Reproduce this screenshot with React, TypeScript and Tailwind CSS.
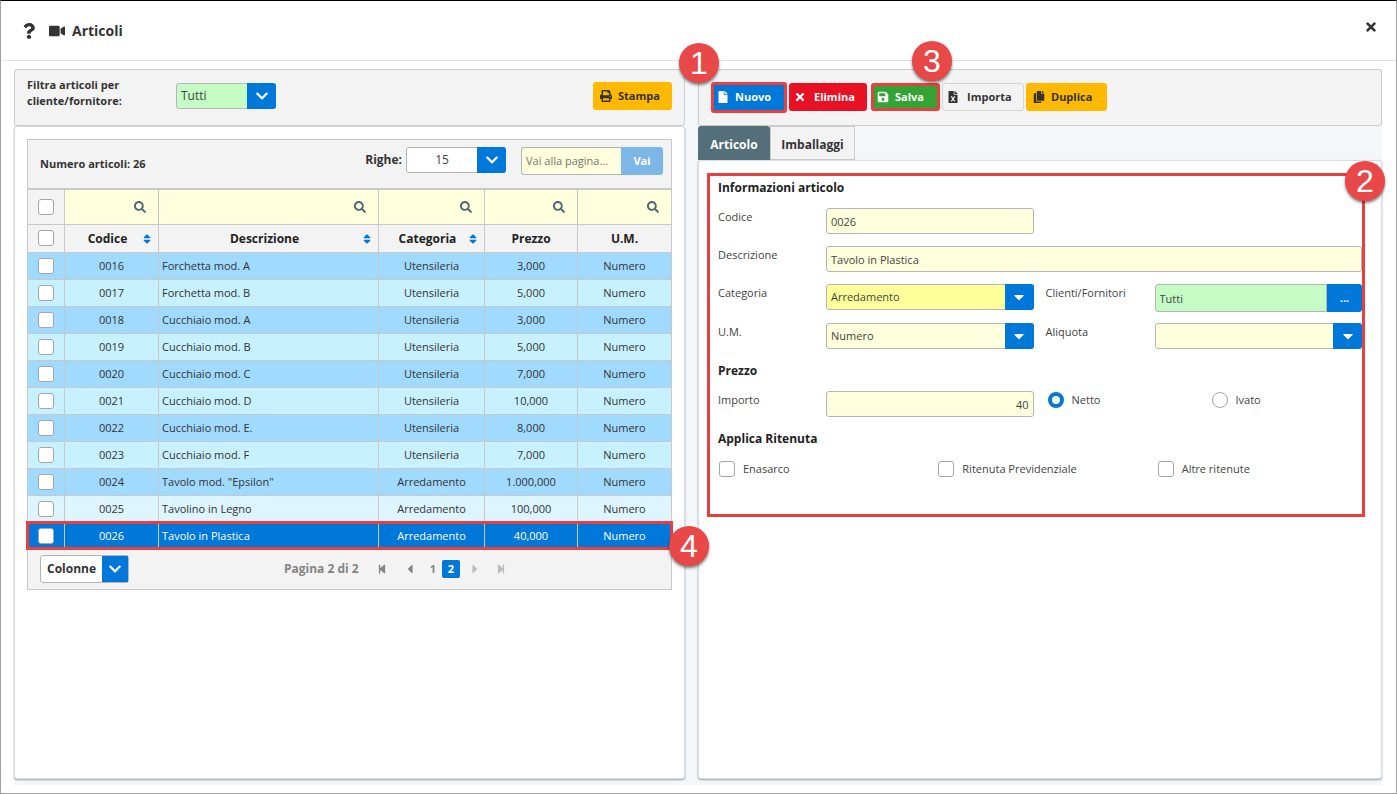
import { useState } from "react";
import type { ReactNode } from "react";
import {
  FaCaretDown,
  FaChevronDown,
  FaCopy,
  FaFile,
  FaFileExcel,
  FaPrint,
  FaQuestion,
  FaSave,
  FaSearch,
  FaSort,
  FaStepBackward,
  FaStepForward,
  FaCaretLeft,
  FaCaretRight,
  FaTimes,
  FaVideo,
} from "react-icons/fa";

type Article = {
  code: string;
  description: string;
  category: string;
  price: string;
  unit: string;
};

const ARTICLES: Article[] = [
  { code: "0016", description: "Forchetta mod. A", category: "Utensileria", price: "3,000", unit: "Numero" },
  { code: "0017", description: "Forchetta mod. B", category: "Utensileria", price: "5,000", unit: "Numero" },
  { code: "0018", description: "Cucchiaio mod. A", category: "Utensileria", price: "3,000", unit: "Numero" },
  { code: "0019", description: "Cucchiaio mod. B", category: "Utensileria", price: "5,000", unit: "Numero" },
  { code: "0020", description: "Cucchiaio mod. C", category: "Utensileria", price: "7,000", unit: "Numero" },
  { code: "0021", description: "Cucchiaio mod. D", category: "Utensileria", price: "10,000", unit: "Numero" },
  { code: "0022", description: "Cucchiaio mod. E.", category: "Utensileria", price: "8,000", unit: "Numero" },
  { code: "0023", description: "Cucchiaio mod. F", category: "Utensileria", price: "7,000", unit: "Numero" },
  { code: "0024", description: 'Tavolo mod. "Epsilon"', category: "Arredamento", price: "1.000,000", unit: "Numero" },
  { code: "0025", description: "Tavolino in Legno", category: "Arredamento", price: "100,000", unit: "Numero" },
  { code: "0026", description: "Tavolo in Plastica", category: "Arredamento", price: "40,000", unit: "Numero" },
];

const COLUMNS = [
  { label: "Codice", sortable: true },
  { label: "Descrizione", sortable: true },
  { label: "Categoria", sortable: true },
  { label: "Prezzo", sortable: false },
  { label: "U.M.", sortable: false },
];

const CHECKBOX = "block size-4 shrink-0 appearance-none rounded-[3px] border border-[#a6a6a6] bg-white checked:bg-[#0078d9]";
const RADIO = "size-4 appearance-none rounded-full border border-[#a6a6a6] bg-white checked:border-4 checked:border-[#0078d9]";
const FIELD = "h-[26px] w-full min-w-0 rounded-[3px] border border-[#b5b5b5] bg-[#ffffdd] px-1 text-[#444]";
const CELL = "border border-[#c8c8c8]";
const PANEL = "grow rounded-[3px] border border-[#d5dde2] bg-white shadow-[0_1px_2px_rgba(0,0,0,0.35)]";

const rowColor = (i: number, selected: boolean) => {
  if (selected) return "bg-[#0078d9] text-white";
  if (i === 9) return "bg-[#dcf5ff]";
  return i % 2 === 0 ? "bg-[#a0dafe]" : "bg-[#c7f1fe]";
};

const Callout = ({ n, className }: { n: number; className: string }) => (
  <span
    className={`absolute z-20 flex size-10 items-center justify-center rounded-full bg-[#e84848] font-['Liberation_Sans',sans-serif] text-[32px] font-normal leading-none text-white shadow-[0_2px_3px_rgba(0,0,0,0.5)] ${className}`}
  >
    {n}
  </span>
);

type DropdownProps = {
  id: string;
  label: string;
  options: string[];
  className: string;
  caret?: boolean;
};

const Dropdown = ({ id, label, options, className, caret }: DropdownProps) => (
  <div className="relative w-full self-start">
    <select
      id={id}
      aria-label={label}
      className={`block h-[26px] w-full appearance-none rounded-[3px] border border-[#b5b5b5] pl-1 pr-8 text-[#444] ${className}`}
    >
      {options.map(o => (
        <option key={o}>{o}</option>
      ))}
    </select>
    <span className="pointer-events-none absolute inset-y-0 right-0 flex w-[29px] items-center justify-center rounded-r-[3px] bg-[#0078d9] text-white">
      {caret ? <FaCaretDown className="size-4" /> : <FaChevronDown className="size-[14px]" />}
    </span>
  </div>
);

const ToolButton = ({ icon, children, className }: { icon: ReactNode; children: ReactNode; className: string }) => (
  <button type="button" className={`flex shrink-0 items-center rounded-[3px] font-bold ${className}`}>
    {icon}
    {children}
  </button>
);

const ArticleList = () => {
  const [selected, setSelected] = useState("0026");

  return (
    <section className="flex min-w-0 flex-col">
      <div className="flex h-[57px] items-start rounded-[3px] border border-[#ccc] bg-[#f3f3f3] px-3">
        <label htmlFor="filter" className="mt-[7px] w-[149px] pr-10 font-bold leading-4">
          Filtra articoli per cliente/fornitore:
        </label>
        <div className="mt-[13px] w-[100px] text-[12px]">
          <Dropdown id="filter" label="Filtra articoli" options={["Tutti"]} className="bg-[#c5fbc5]" />
        </div>
        <ToolButton icon={<FaPrint className="mr-1.5 size-3" />} className="mt-3 ml-auto h-7 w-[79px] bg-[#ffb900] pl-[7px]">
          Stampa
        </ToolButton>
      </div>

      <div className={`${PANEL} p-3`}>
        <div className="border border-b-0 border-[#c8c8c8] bg-[#f3f3f3]">
          <div className="flex h-12 items-start px-3">
            <h2 className="mt-4 font-bold leading-4">Numero articoli: 26</h2>
            <label htmlFor="rows" className="mt-3 ml-auto mr-1 text-[12px] font-bold leading-4">Righe:</label>
            <div className="mt-[7px] w-[100px] text-[12px]">
              <Dropdown id="rows" label="Righe" options={["15"]} className="bg-white text-center" />
            </div>
            <div className="mt-[7px] -mr-1 ml-[15px] flex h-7 w-[142px]">
              <input
                aria-label="Vai alla pagina"
                placeholder="Vai alla pagina..."
                className="w-[100px] rounded-l-[3px] border border-r-0 border-[#b5b5b5] bg-[#ffffdd] px-1 placeholder:text-[#757575]"
              />
              <button type="button" className="grow rounded-r-[3px] bg-[#7db7e8] font-bold text-white">Vai</button>
            </div>
          </div>
        </div>

        <div className="relative">
          <table className="w-full table-fixed border-collapse border-t-2 border-[#c8c8c8] text-center">
            <colgroup>
              <col className="w-[37px]" />
              <col className="w-[94px]" />
              <col />
              <col className="w-[106px]" />
              <col className="w-[93px]" />
              <col className="w-[94px]" />
            </colgroup>
            <thead>
              <tr className="h-[35px] bg-[#ffffdd]">
                <td className={`${CELL} bg-[#f3f3f3]`}>
                  <input type="checkbox" aria-label="Filtra selezionati" className={`${CHECKBOX} mx-auto`} />
                </td>
                {COLUMNS.map(c => (
                  <td key={c.label} className={CELL}>
                    <button type="button" aria-label={`Cerca ${c.label}`} className="ml-auto mr-3 block text-[#4d6875]">
                      <FaSearch className="size-3" />
                    </button>
                  </td>
                ))}
              </tr>
              <tr className="h-7 bg-[#f3f3f3] text-[12px] text-[#222]">
                <th className={CELL}>
                  <input type="checkbox" aria-label="Seleziona tutti" className={`${CHECKBOX} mx-auto`} />
                </th>
                {COLUMNS.map(c => (
                  <th key={c.label} className={`${CELL} pt-0.5`}>
                    <div className="flex items-center justify-between px-[5px]">
                      {c.sortable && <span className="w-1" />}
                      <span className="grow">{c.label}</span>
                      {c.sortable && <FaSort className="size-3 text-[#0078d9]" />}
                    </div>
                  </th>
                ))}
              </tr>
            </thead>
            <tbody>
              {ARTICLES.map((a, i) => (
                <tr key={a.code} onClick={() => setSelected(a.code)} className={`h-[27px] ${rowColor(i, a.code === selected)}`}>
                  <td className={CELL}>
                    <input type="checkbox" aria-label={`Seleziona ${a.code}`} className={`${CHECKBOX} mx-auto`} />
                  </td>
                  <td className={`${CELL} pt-0.5`}>{a.code}</td>
                  <td className={`${CELL} px-[3px] pt-0.5 text-left`}>{a.description}</td>
                  <td className={`${CELL} pt-0.5`}>{a.category}</td>
                  <td className={`${CELL} pt-0.5`}>{a.price}</td>
                  <td className={`${CELL} pt-0.5`}>{a.unit}</td>
                </tr>
              ))}
            </tbody>
          </table>
          <span className="pointer-events-none absolute -inset-x-px bottom-0 h-[29px] border-[3px] border-[#e84040]" />
          <Callout n={4} className="-right-[37px] -bottom-4" />
        </div>

        <div className="flex h-10 items-center border border-t-0 border-[#c8c8c8] bg-[#f3f3f3] px-3 font-bold">
          <button type="button" className="flex h-7 w-[89px] items-center rounded-[3px] border border-[#b5b5b5] bg-white text-[12px]">
            <span className="grow">Colonne</span>
            <span className="flex h-full w-[26px] items-center justify-center bg-[#0078d9] text-white">
              <FaChevronDown className="size-[14px]" />
            </span>
          </button>
          <nav aria-label="Pagine" className="mr-auto ml-[155px] flex items-center text-[#848484]">
            <span className="w-[93px] text-[12px]">Pagina 2 di 2</span>
            <button type="button" aria-label="Prima pagina" className="w-[26px]"><FaStepBackward className="size-[10px]" /></button>
            <button type="button" aria-label="Pagina precedente" className="w-6"><FaCaretLeft className="size-[14px]" /></button>
            <button type="button" className="mr-[3px] w-3">1</button>
            <button type="button" aria-current="page" className="mr-2 size-[18px] rounded-[2px] bg-[#0078d9] text-white">2</button>
            <button type="button" aria-label="Pagina successiva" disabled className="w-7 text-[#bbb]"><FaCaretRight className="size-[14px]" /></button>
            <button type="button" aria-label="Ultima pagina" disabled className="text-[#bbb]"><FaStepForward className="size-[10px]" /></button>
          </nav>
        </div>
      </div>
    </section>
  );
};

const ArticleForm = () => (
  <form className="relative mt-3 mr-4 ml-2 grid h-[344px] grid-cols-[108px_1fr_121px_1fr] content-start border-[3px] border-[#e84040] pl-2 leading-[18px] text-[#444]">
    <h3 className="col-span-4 h-8 pt-1 text-[12px] font-bold leading-4 text-[#222]">Informazioni articolo</h3>

    <label htmlFor="code">Codice</label>
    <input id="code" defaultValue="0026" className={FIELD} />
    <span className="col-span-2 h-[38px]" />

    <label htmlFor="description">Descrizione</label>
    <div className="col-span-3 h-[38px]">
      <input id="description" defaultValue="Tavolo in Plastica" className={FIELD} />
    </div>

    <label htmlFor="category">Categoria</label>
    <Dropdown id="category" label="Categoria" options={["Arredamento", "Utensileria"]} className="bg-[#ffff99]" caret />
    <label htmlFor="customers" className="pl-3">Clienti/Fornitori</label>
    <div className="flex h-[39px] items-start">
      <input id="customers" defaultValue="Tutti" className="h-7 w-full min-w-0 rounded-l-[3px] border border-[#b5b5b5] bg-[#c5fbc5] px-1" />
      <button type="button" className="h-7 w-[35px] shrink-0 rounded-r-[3px] bg-[#0078d9] font-bold text-white">...</button>
    </div>

    <label htmlFor="unit">U.M.</label>
    <Dropdown id="unit" label="U.M." options={["Numero"]} className="bg-[#ffffdd]" caret />
    <label htmlFor="vat" className="pl-3">Aliquota</label>
    <div className="h-10">
      <Dropdown id="vat" label="Aliquota" options={[""]} className="bg-[#ffffdd]" caret />
    </div>

    <h3 className="col-span-4 h-7 text-[12px] font-bold leading-4 text-[#222]">Prezzo</h3>
    <label htmlFor="amount">Importo</label>
    <input id="amount" defaultValue="40" className={`${FIELD} text-right`} />
    <div className="col-span-2 flex h-10 pl-3.5">
      <label className="flex h-[18px] w-[164px] items-center gap-2">
        <input type="radio" name="tax" defaultChecked className={RADIO} />
        Netto
      </label>
      <label className="flex h-[18px] items-center gap-2">
        <input type="radio" name="tax" className={RADIO} />
        Ivato
      </label>
    </div>

    <h3 className="col-span-4 h-[29px] text-[12px] font-bold leading-4 text-[#222]">Applica Ritenuta</h3>
    <div className="col-span-4 grid grid-cols-[219fr_219fr_204fr] pl-px">
      {["Enasarco", "Ritenuta Previdenziale", "Altre ritenute"].map(t => (
        <label key={t} className="flex items-center gap-2">
          <input type="checkbox" className={CHECKBOX} />
          {t}
        </label>
      ))}
    </div>
    <Callout n={2} className="-top-[15px] -right-[23px]" />
  </form>
);

const ArticleDetail = () => (
  <section className="flex min-w-0 flex-col">
    <div className="relative flex h-[57px] items-center gap-0.5 rounded-[3px] border border-[#ccc] bg-[#f3f3f3] px-3 pb-px">
      <ToolButton icon={<FaFile className="mr-1.5 size-3" />} className="h-[31px] w-[76px] border-[3px] border-[#e84040] bg-[#0078d9] pl-[3px] text-white">
        Nuovo
      </ToolButton>
      <ToolButton icon={<FaTimes className="mr-2 size-3" />} className="h-7 w-[78px] bg-[#e81123] pl-[5px] text-white">
        Elimina
      </ToolButton>
      <ToolButton icon={<FaSave className="mr-1.5 size-3" />} className="ml-0.5 h-7 w-[69px] border-[3px] border-[#e84040] bg-[#33a333] pl-[3px] text-white">
        Salva
      </ToolButton>
      <ToolButton icon={<FaFileExcel className="mr-2 size-3" />} className="h-7 w-[82px] border border-[#d5d5d5] pl-1">
        Importa
      </ToolButton>
      <ToolButton icon={<FaCopy className="mr-1.5 size-3" />} className="h-7 w-[81px] bg-[#ffb900] pl-[7px]">
        Duplica
      </ToolButton>
      <Callout n={1} className="-top-[27px] -left-[20px]" />
      <Callout n={3} className="-top-[29px] left-[213px]" />
    </div>

    <div role="tablist" className="flex h-[34px] text-[12px] font-bold">
      <button type="button" role="tab" aria-selected="true" className="w-[72px] rounded-t-[3px] bg-[#546e7a] pt-1 text-white">Articolo</button>
      <button type="button" role="tab" aria-selected="false" className="w-[85px] border border-[#ccc] bg-[#f3f3f3] pt-1">Imballaggi</button>
    </div>

    <div className={PANEL}>
      <ArticleForm />
    </div>
  </section>
);

const App = () => (
  <div className="flex min-h-screen flex-col border border-t-black border-[#a0a0a0] bg-white font-['Open_Sans','Noto_Sans',sans-serif] text-[11px] text-[#333]">
    <header className="flex h-[60px] items-center border-b border-[#dfe5e9] px-5">
      <button type="button" aria-label="Aiuto"><FaQuestion className="size-4" /></button>
      <FaVideo className="mr-[7px] ml-3 size-4" />
      <h1 className="text-[14px] font-bold">Articoli</h1>
      <button type="button" aria-label="Chiudi" className="mb-2 ml-auto -mr-0.5"><FaTimes className="size-[14px]" /></button>
    </header>
    <main className="mt-2 mr-3.5 mb-2 ml-[13px] grid grow grid-cols-[671fr_684fr] gap-[13px] bg-[#f3f7f9] pb-1.5">
      <ArticleList />
      <ArticleDetail />
    </main>
  </div>
);

export default App;
